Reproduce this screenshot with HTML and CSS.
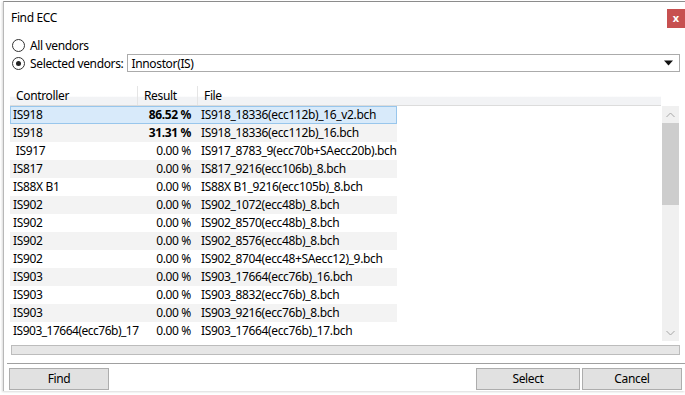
FILE: index.html
```html
<!DOCTYPE html>
<html>
<head>
<meta charset="utf-8">
<link rel="stylesheet" href="styles.css">
</head>
<body>
<div class="dialog">
  <div class="titlebar">
    <span class="title">Find ECC</span>
    <span class="close">x</span>
  </div>
  <div class="content">
    <div class="radio-row">
      <span class="radio"></span>
      <span class="radio-label">All vendors</span>
    </div>
    <div class="radio-row">
      <span class="radio checked"></span>
      <span class="radio-label">Selected vendors:</span>
      <div class="select">
        <span>Innostor(IS)</span>
        <svg class="select-arrow" width="9" height="6" viewBox="0 0 9 6"><path d="M0 0.5 L9 0.5 L4.5 5.5 Z" fill="#111"/></svg>
      </div>
    </div>
    <div class="list">
      <div class="list-main">
        <div class="header">
          <div class="hc c1">Controller</div>
          <div class="hc c2">Result</div>
          <div class="hc c3">File</div>
          <div class="hc rest"></div>
        </div>
        <div class="rows">
          <div class="row selected"><span class="c1">IS918</span><span class="c2 bold">86.52 %</span><span class="c3">IS918_18336(ecc112b)_16_v2.bch</span></div>
          <div class="row alt"><span class="c1">IS918</span><span class="c2 bold">31.31 %</span><span class="c3">IS918_18336(ecc112b)_16.bch</span></div>
          <div class="row"><span class="c1">&nbsp;IS917</span><span class="c2">0.00 %</span><span class="c3">IS917_8783_9(ecc70b+SAecc20b).bch</span></div>
          <div class="row alt"><span class="c1">IS817</span><span class="c2">0.00 %</span><span class="c3">IS817_9216(ecc106b)_8.bch</span></div>
          <div class="row"><span class="c1">IS88X B1</span><span class="c2">0.00 %</span><span class="c3">IS88X B1_9216(ecc105b)_8.bch</span></div>
          <div class="row alt"><span class="c1">IS902</span><span class="c2">0.00 %</span><span class="c3">IS902_1072(ecc48b)_8.bch</span></div>
          <div class="row"><span class="c1">IS902</span><span class="c2">0.00 %</span><span class="c3">IS902_8570(ecc48b)_8.bch</span></div>
          <div class="row alt"><span class="c1">IS902</span><span class="c2">0.00 %</span><span class="c3">IS902_8576(ecc48b)_8.bch</span></div>
          <div class="row"><span class="c1">IS902</span><span class="c2">0.00 %</span><span class="c3">IS902_8704(ecc48+SAecc12)_9.bch</span></div>
          <div class="row alt"><span class="c1">IS903</span><span class="c2">0.00 %</span><span class="c3">IS903_17664(ecc76b)_16.bch</span></div>
          <div class="row"><span class="c1">IS903</span><span class="c2">0.00 %</span><span class="c3">IS903_8832(ecc76b)_8.bch</span></div>
          <div class="row alt"><span class="c1">IS903</span><span class="c2">0.00 %</span><span class="c3">IS903_9216(ecc76b)_8.bch</span></div>
          <div class="row"><span class="c1 long">IS903_17664(ecc76b)_17</span><span class="c2">0.00 %</span><span class="c3">IS903_17664(ecc76b)_17.bch</span></div>
        </div>
      </div>
      <div class="vscroll">
        <div class="sb-btn"><svg width="9" height="6" viewBox="0 0 9 6"><path d="M0.5 5 L4.5 1 L8.5 5" fill="none" stroke="#a6a6a6" stroke-width="1"/></svg></div>
        <div class="sb-thumb"></div>
        <div class="sb-track"></div>
        <div class="sb-btn"><svg width="9" height="6" viewBox="0 0 9 6"><path d="M0.5 1 L4.5 5 L8.5 1" fill="none" stroke="#a6a6a6" stroke-width="1"/></svg></div>
      </div>
    </div>
    <div class="hbar"></div>
  </div>
  <div class="separator"></div>
  <div class="buttons">
    <button class="btn">Find</button>
    <div class="spacer"></div>
    <button class="btn wide">Select</button>
    <button class="btn">Cancel</button>
  </div>
</div>
</body>
</html>
```
FILE: styles.css
```css
html, body {
  margin: 0;
  padding: 0;
  background: #ffffff;
  overflow: hidden;
}
body {
  width: 685px;
  height: 395px;
  padding: 1px 0 0 3px;
  box-sizing: border-box;
  font-family: "Noto Sans", "Liberation Sans", sans-serif;
  font-size: 12px;
  letter-spacing: -0.35px;
  color: #000;
}
.dialog {
  width: 682px;
  height: 390px;
  background: #fff;
  border-top: 1px solid #8c8c8c;
  border-left: 1px solid #b8b8b8;
  box-sizing: border-box;
  box-shadow: -1px 1px 2px rgba(0,0,0,0.15);
  display: flex;
  flex-direction: column;
}
.titlebar {
  height: 30px;
  display: flex;
  align-items: flex-start;
  flex-shrink: 0;
}
.title {
  margin: 8px 0 0 7px;
  line-height: 16px;
}
.close {
  margin: 7px 0 0 auto;
  width: 18px;
  height: 19px;
  background: #c75050;
  color: #fff;
  font-size: 11px;
  line-height: 17px;
  text-align: center;
  font-weight: bold;
  letter-spacing: 0;
}
.content {
  padding: 4px 5px 0 6px;
  display: flex;
  flex-direction: column;
}
.radio-row {
  height: 18px;
  display: flex;
  align-items: center;
}
.radio {
  width: 11px;
  height: 11px;
  border: 1px solid #333;
  border-radius: 50%;
  margin-left: 2px;
  margin-right: 5px;
  box-sizing: content-box;
  flex-shrink: 0;
  display: flex;
  align-items: center;
  justify-content: center;
}
.radio.checked::after {
  content: "";
  width: 5px;
  height: 5px;
  border-radius: 50%;
  background: #222;
}
.radio-label {
  white-space: nowrap;
}
.select {
  margin-left: 4px;
  flex: 1;
  height: 18px;
  border: 1px solid #ababab;
  box-sizing: border-box;
  display: flex;
  align-items: center;
  padding: 0 6px 0 3px;
}
.select span {
  flex: 1;
}
.select-arrow {
  display: block;
}
.list {
  margin-top: 14px;
  height: 255px;
  display: flex;
}
.list-main {
  width: 651px;
  display: flex;
  flex-direction: column;
  overflow: hidden;
}
.header {
  height: 20px;
  display: flex;
  flex-shrink: 0;
  background: linear-gradient(#ffffff 0%, #ffffff 55%, #f2f3f5 56%, #f2f3f5 100%);
  border-bottom: 1px solid #dcdcdc;
  box-sizing: border-box;
}
.hc {
  padding-left: 6px;
  line-height: 20px;
  border-right: 1px solid #e5e5e5;
  box-sizing: border-box;
}
.hc.rest {
  flex: 1;
  border-right: none;
}
.c1 { width: 128px; }
.c2 { width: 60px; }
.c3 { width: 199px; }
.hc.c3 { width: 199px; border-right: none; }
.rows {
  height: 232px;
  flex-shrink: 0;
  overflow: hidden;
}
.row {
  width: 387px;
  height: 18px;
  display: flex;
  align-items: center;
  white-space: nowrap;
  box-sizing: border-box;
}
.row.alt {
  background: #f3f3f3;
}
.row.selected {
  background: #d8eafa;
  border: 1px solid #98c6ec;
}
.row span {
  overflow: hidden;
  line-height: 18px;
  flex-shrink: 0;
}
.row .c1 {
  padding-left: 3px;
  box-sizing: border-box;
}
.row .c1.long {
  overflow: visible;
  letter-spacing: -0.5px;
}
.row .c2 {
  text-align: right;
  padding-right: 7px;
  box-sizing: border-box;
}
.row .c3 {
  padding-left: 3px;
  box-sizing: border-box;
  overflow: visible;
}
.row.selected .c1 { width: 127px; padding-left: 2px; }
.bold { font-weight: bold; }
.vscroll {
  margin-top: 20px;
  margin-left: 1px;
  width: 17px;
  background: #f0f0f0;
  display: flex;
  flex-direction: column;
}
.sb-btn {
  height: 17px;
  display: flex;
  align-items: center;
  justify-content: center;
  flex-shrink: 0;
}
.sb-thumb {
  height: 82px;
  background: #cdcdcd;
  flex-shrink: 0;
}
.sb-track {
  flex: 1;
}
.hbar {
  margin: 4px 0 0 1px;
  height: 10px;
  background: #e6e6e6;
  border: 1px solid #bcbcbc;
  box-sizing: border-box;
}
.separator {
  margin: 8px 0 0 3px;
  height: 1px;
  background: #a0a0a0;
}
.buttons {
  margin-top: 4px;
  padding: 0 3px 0 5px;
  display: flex;
  gap: 2px;
}
.spacer { flex: 1; }
.btn {
  width: 100px;
  height: 22px;
  border: 1px solid #adadad;
  background: #e1e1e1;
  font-family: "Noto Sans", "Liberation Sans", sans-serif;
  font-size: 12px;
  letter-spacing: -0.35px;
  color: #000;
  padding: 0;
  line-height: 18px;
}
.btn.wide { width: 104px; }
```
